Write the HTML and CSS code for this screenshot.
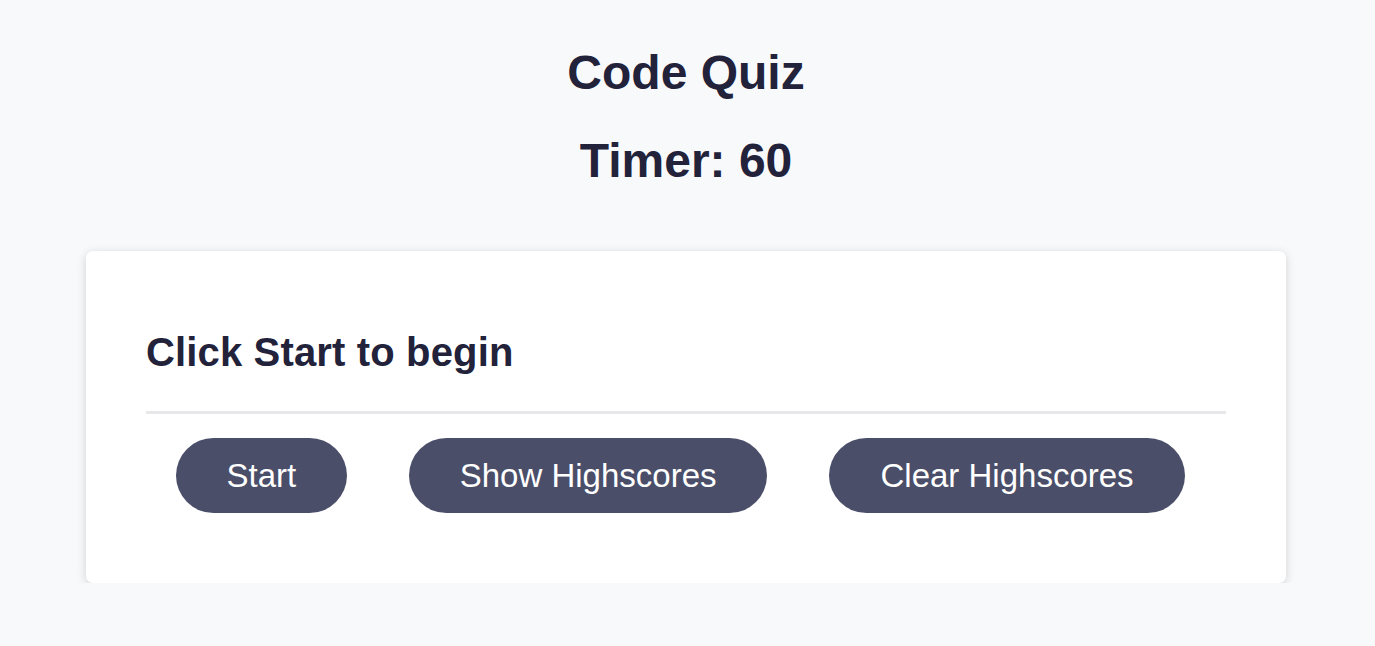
FILE: index.html
```html
<!DOCTYPE html>
<html lang="en">
<head>
<meta charset="utf-8">
<title>Code Quiz</title>
<link rel="stylesheet" href="styles.css">
</head>
<body>
<header class="header">
  <h1 class="title">Code Quiz</h1>
  <h2 class="timer">Timer: 60</h2>
</header>
<main class="card">
  <h3 class="prompt">Click Start to begin</h3>
  <hr class="divider">
  <div class="actions">
    <button class="btn btn-start">Start</button>
    <button class="btn">Show Highscores</button>
    <button class="btn">Clear Highscores</button>
  </div>
</main>
</body>
</html>
```
FILE: styles.css
```css
html, body {
  margin: 0;
  padding: 0;
}
body {
  background: #f8f9fb;
  font-family: "Liberation Sans", Arial, sans-serif;
  color: #22223b;
  padding-right: 3px;
}
.header {
  display: flex;
  flex-direction: column;
  align-items: center;
  padding-top: 45px;
}
.title, .timer {
  margin: 0;
  font-size: 48px;
  font-weight: bold;
  line-height: 55px;
}
.timer {
  margin-top: 33px;
}
.card {
  width: 1080px;
  margin: 63px auto 0;
  padding: 78px 60px 70px;
  background: #ffffff;
  border-radius: 7px;
  box-shadow: 0 2px 10px rgba(0, 0, 0, 0.16);
}
.prompt {
  margin: 0;
  font-size: 40px;
  font-weight: bold;
  line-height: 46px;
  letter-spacing: 0.15px;
}
.divider {
  margin: 36px 0 0;
  border: 0;
  height: 3px;
  background: #e8e8ea;
}
.actions {
  display: flex;
  gap: 62px;
  padding-left: 30px;
  margin-top: 24px;
}
.btn {
  font-family: "Liberation Sans", Arial, sans-serif;
  font-size: 33px;
  color: #ffffff;
  background: #4a4e69;
  border: 0;
  border-radius: 38px;
  height: 75px;
  padding: 0 51px;
  line-height: 75px;
}
.btn-start {
  padding: 0 50.5px;
}
```
